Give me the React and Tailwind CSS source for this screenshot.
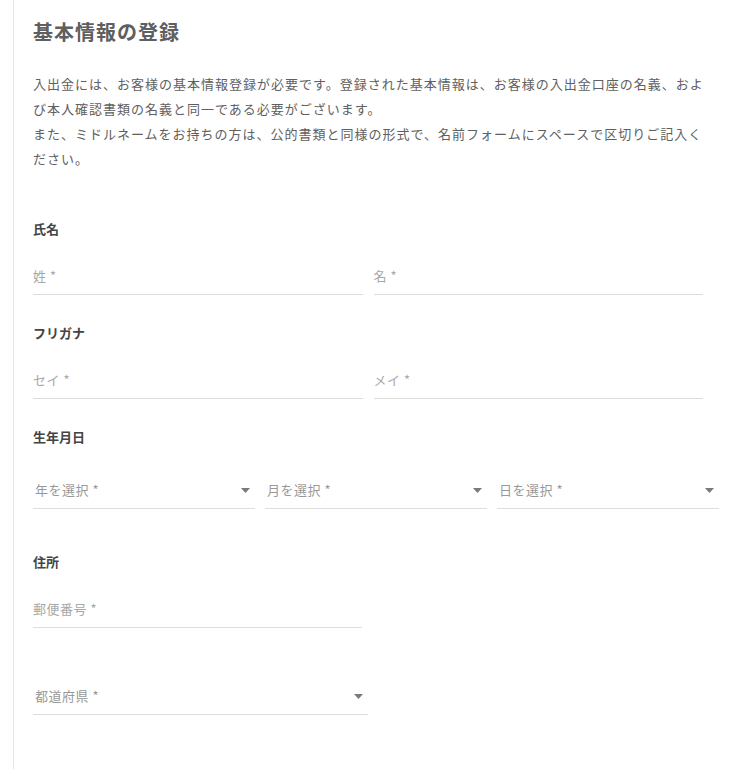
const FONT = { fontFamily: '"Noto Sans CJK JP", "Noto Sans", sans-serif' };

function TextField({ label, className = '' }) {
  return (
    <div className={`h-[37px] flex items-center border-b border-[#dddddd] ${className}`}>
      <span className="text-[13px] text-[#a8a8a8] tracking-[0.5px]">{label} *</span>
    </div>
  );
}

function SelectField({ label, className = '' }) {
  return (
    <div className={`h-[37px] flex items-center justify-between border-b border-[#dddddd] pl-[2px] pr-[5px] ${className}`}>
      <span className="text-[13px] text-[#999999] tracking-[0.5px]">{label} *</span>
      <svg width="9" height="5" viewBox="0 0 9 5">
        <path d="M0 0 L9 0 L4.5 5 Z" fill="#7a7a7a" />
      </svg>
    </div>
  );
}

function Label({ children, className = '' }) {
  return <div className={`text-[13px] leading-[20px] font-bold text-[#444444] ${className}`}>{children}</div>;
}

export default function App() {
  return (
    <div className="min-h-[769px] bg-white" style={FONT}>
      <div className="ml-[13px] border-l border-[#e4e4e4] min-h-[769px] pl-[19px] pt-[20px]">
        <h1 className="text-[20px] leading-[24px] font-bold text-[#5f5f5f] tracking-[1px]">基本情報の登録</h1>

        <p className="w-[680px] mt-[27px] text-[13px] leading-[25px] tracking-[1px] text-[#606060]">
          入出金には、お客様の基本情報登録が必要です。登録された基本情報は、お客様の入出金口座の名義、および本人確認書類の名義と同一である必要がございます。
          <br />
          また、ミドルネームをお持ちの方は、公的書類と同様の形式で、名前フォームにスペースで区切りご記入ください。
        </p>

        <Label className="mt-[48px]">氏名</Label>
        <div className="w-[670px] grid grid-cols-2 gap-[11px] mt-[19px]">
          <TextField label="姓" />
          <TextField label="名" />
        </div>

        <Label className="mt-[28px]">フリガナ</Label>
        <div className="w-[670px] grid grid-cols-2 gap-[11px] mt-[19px]">
          <TextField label="セイ" />
          <TextField label="メイ" />
        </div>

        <Label className="mt-[28px]">生年月日</Label>
        <div className="w-[686px] grid grid-cols-3 gap-[10px] mt-[25px]">
          <SelectField label="年を選択" />
          <SelectField label="月を選択" />
          <SelectField label="日を選択" />
        </div>

        <Label className="mt-[43px]">住所</Label>
        <TextField label="郵便番号" className="w-[329px] mt-[19px]" />

        <SelectField label="都道府県" className="w-[335px] mt-[50px]" />
      </div>
    </div>
  );
}
